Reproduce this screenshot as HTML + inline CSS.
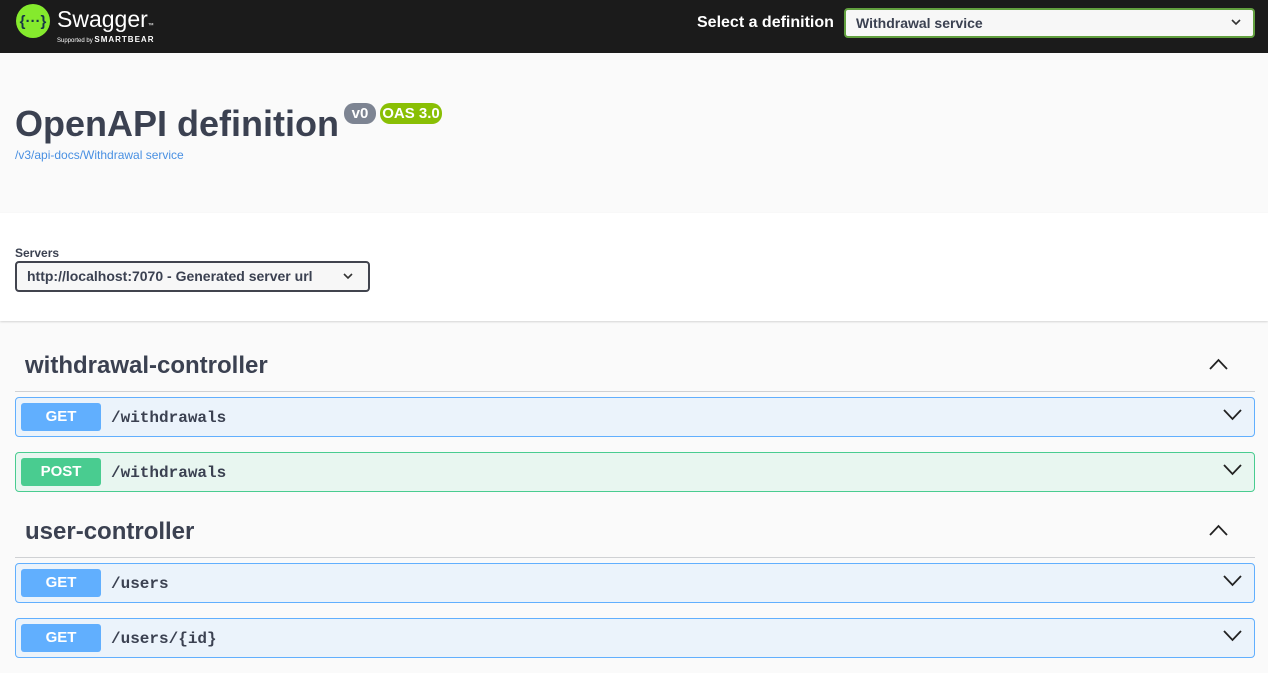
<!DOCTYPE html>
<html><head><meta charset="utf-8"><style>
*{box-sizing:border-box;margin:0;padding:0}
body{width:1268px;height:673px;overflow:hidden;background:#fafafa;font-family:"Liberation Sans",sans-serif;position:relative;color:#3b4151}
.a{position:absolute}
.hdr{left:0;top:0;width:1268px;height:53px;background:#1b1b1b}
.op{left:15px;width:1240px;height:40px;border:1px solid;border-radius:4px}
.get{background:#ebf3fb;border-color:#61affe}
.post{background:#e8f6f0;border-color:#49cc90}
.m{position:absolute;left:5px;top:5px;width:80px;height:28px;border-radius:3px;color:#fff;font-weight:bold;font-size:15px;text-align:center;line-height:28px}
.get .m{background:#61affe}.post .m{background:#49cc90}
.p{position:absolute;left:95px;top:1px;line-height:38px;font-family:"Liberation Mono",monospace;font-weight:bold;font-size:16px;color:#3b4151}
.ch{position:absolute;right:12px;top:11px}
.tag{left:25px;font-size:24px;font-weight:bold;color:#3b4151}
.line{left:15px;width:1240px;height:1px;background:#cfd1d4}
</style></head><body>
<div class="a hdr"></div>
<svg class="a" style="left:15px;top:3px" width="36" height="36" viewBox="0 0 36 36"><circle cx="18" cy="18" r="17" fill="#85ea2d"/><text x="18" y="23" font-family="Liberation Sans" font-size="15" font-weight="bold" text-anchor="middle" fill="#173647">{···}</text></svg>
<div class="a" style="left:57px;top:6px;color:#fff;font-size:23px">Swagger<span style="font-size:6px">™</span></div>
<div class="a" style="left:57px;top:35px;color:#fff;font-size:6px">Supported by <b style="font-size:8px;letter-spacing:1px">SMARTBEAR</b></div>
<div class="a" style="left:697px;top:14px;color:#fff;font-size:16px;font-weight:bold">Select a definition</div>
<div class="a" style="left:844px;top:8px;width:411px;height:30px;background:#f7f7f7;border:2px solid #62a03f;border-radius:4px;font-size:14px;font-weight:bold;padding-left:10px;line-height:26px">Withdrawal service
<svg style="position:absolute;right:12px;top:9px" width="10" height="7" viewBox="0 0 10 7"><path d="M1 1l4 4 4-4" stroke="#333" stroke-width="1.6" fill="none"/></svg></div>
<div class="a" style="left:15px;top:103px;font-size:36px;font-weight:bold">OpenAPI definition</div>
<div class="a" style="left:344px;top:103px;height:21px;width:32px;background:#7d8492;border-radius:10px;color:#fff;font-size:15px;font-weight:bold;text-align:center;line-height:21px">v0</div>
<div class="a" style="left:380px;top:103px;height:21px;width:62px;background:#89bf04;border-radius:10px;color:#fff;font-size:15px;font-weight:bold;text-align:center;line-height:21px">OAS 3.0</div>
<div class="a" style="left:15px;top:148px;font-size:12px;color:#4990e2">/v3/api-docs/Withdrawal service</div>
<div class="a" style="left:0;top:213px;width:1268px;height:108px;background:#fff;box-shadow:0 1px 2px rgba(0,0,0,.15)"></div>
<div class="a" style="left:15px;top:246px;font-size:12px;font-weight:bold">Servers</div>
<div class="a" style="left:15px;top:261px;width:355px;height:31px;border:2px solid #41444e;border-radius:4px;background:#f7f7f7;font-size:14px;font-weight:bold;padding-left:10px;line-height:27px">http://localhost:7070 - Generated server url
<svg style="position:absolute;right:15px;top:10px" width="10" height="7" viewBox="0 0 10 7"><path d="M1 1l4 4 4-4" stroke="#333" stroke-width="1.6" fill="none"/></svg></div>

<div class="a tag" style="top:352px">withdrawal-controller</div>
<svg class="a" style="left:1209px;top:358px" width="19" height="12" viewBox="0 0 19 12"><path d="M1 11l8.5-9 8.5 9" stroke="#222" stroke-width="1.8" fill="none"/></svg>
<div class="a line" style="top:391px"></div>
<div class="a op get" style="top:397px"><div class="m">GET</div><div class="p">/withdrawals</div><svg class="ch" width="19" height="12" viewBox="0 0 19 12"><path d="M1 1l8.5 9 8.5-9" stroke="#222" stroke-width="1.8" fill="none"/></svg></div>
<div class="a op post" style="top:452px"><div class="m">POST</div><div class="p">/withdrawals</div><svg class="ch" width="19" height="12" viewBox="0 0 19 12"><path d="M1 1l8.5 9 8.5-9" stroke="#222" stroke-width="1.8" fill="none"/></svg></div>

<div class="a tag" style="top:518px">user-controller</div>
<svg class="a" style="left:1209px;top:524px" width="19" height="12" viewBox="0 0 19 12"><path d="M1 11l8.5-9 8.5 9" stroke="#222" stroke-width="1.8" fill="none"/></svg>
<div class="a line" style="top:557px"></div>
<div class="a op get" style="top:563px"><div class="m">GET</div><div class="p">/users</div><svg class="ch" width="19" height="12" viewBox="0 0 19 12"><path d="M1 1l8.5 9 8.5-9" stroke="#222" stroke-width="1.8" fill="none"/></svg></div>
<div class="a op get" style="top:618px"><div class="m">GET</div><div class="p">/users/{id}</div><svg class="ch" width="19" height="12" viewBox="0 0 19 12"><path d="M1 1l8.5 9 8.5-9" stroke="#222" stroke-width="1.8" fill="none"/></svg></div>
</body></html>
